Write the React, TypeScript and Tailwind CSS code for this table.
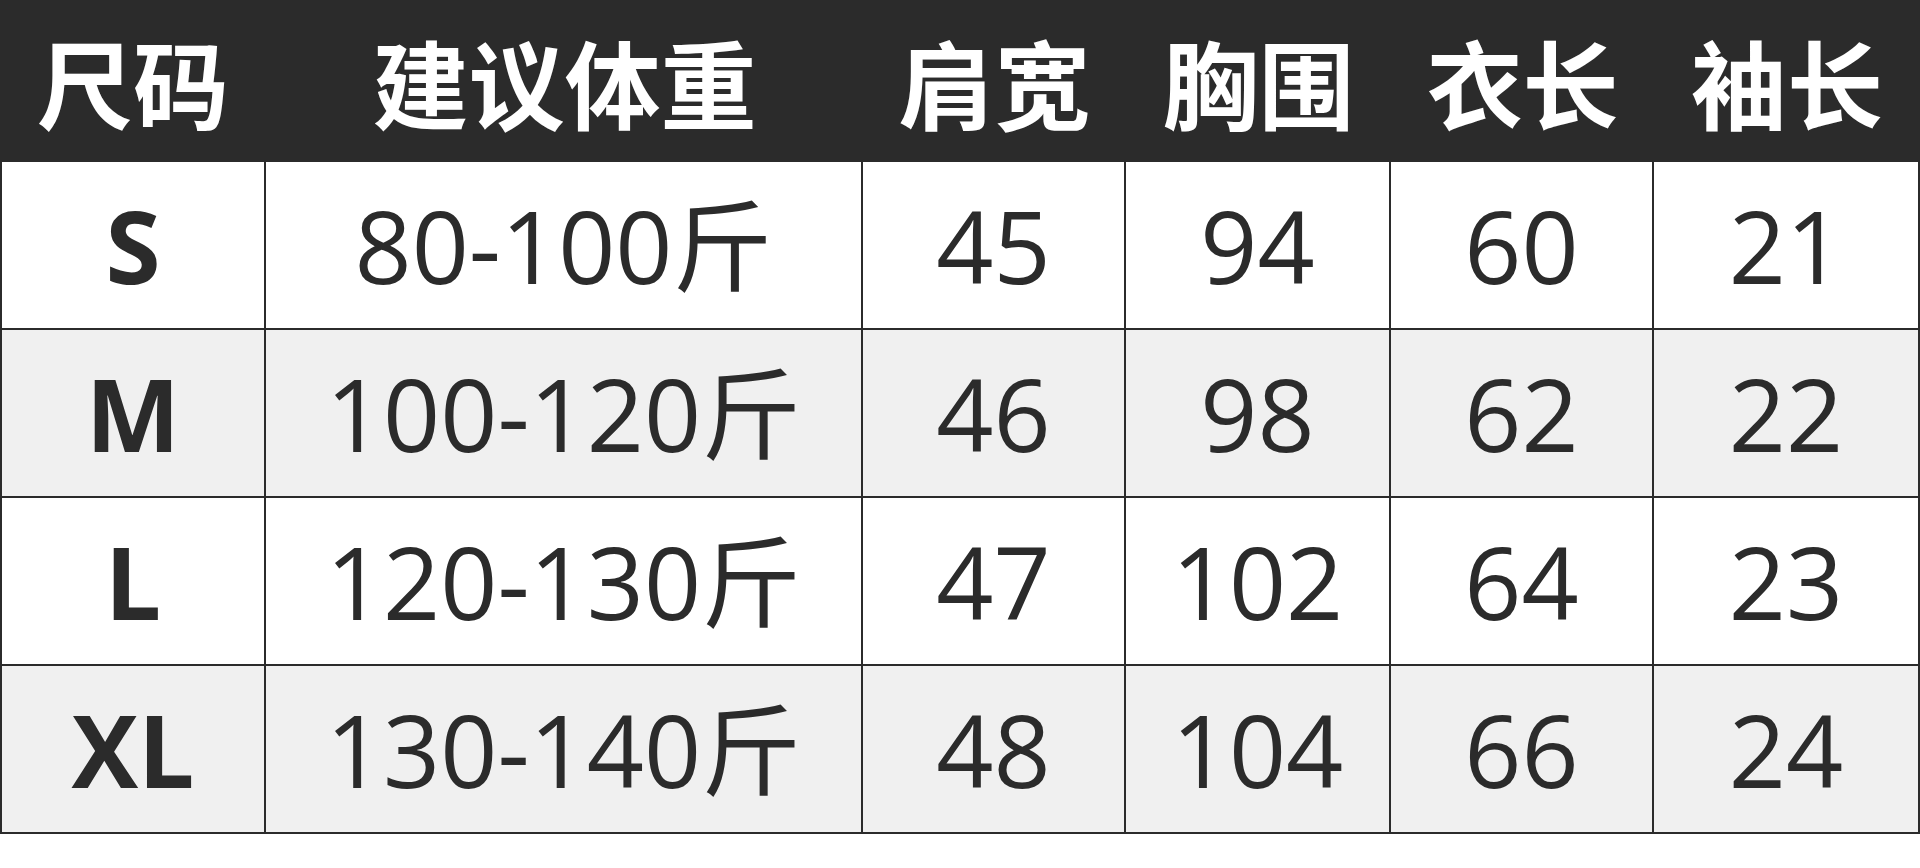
import React from "react";

const headers = ["尺码", "建议体重", "肩宽", "胸围", "衣长", "袖长"];

const rows = [
  ["S", "80-100", "45", "94", "60", "21"],
  ["M", "100-120", "46", "98", "62", "22"],
  ["L", "120-130", "47", "102", "64", "23"],
  ["XL", "130-140", "48", "104", "66", "24"],
];

const grid = "grid grid-cols-[266px_597px_263px_265px_263px_266px]";

export default function App() {
  return (
    <div className="w-[1920px] h-[868px] bg-white overflow-hidden">
      <div className={`${grid} h-[162px] bg-[#2b2b2b]`}>
        {headers.map((h) => (
          <div
            key={h}
            className="flex items-center justify-center text-white font-bold text-[96px] leading-none"
            style={{ fontFamily: '"Noto Sans CJK SC", sans-serif' }}
          >
            {h}
          </div>
        ))}
      </div>
      {rows.map((r, i) => (
        <div
          key={r[0]}
          className={`${grid} h-[168px] ${i % 2 === 1 ? "bg-[#f0f0f0]" : "bg-white"}`}
        >
          {r.map((c, j) => (
            <div
              key={j}
              className={`flex items-center justify-center border-b-2 border-r-2 border-[#2b2b2b] text-[#2b2b2b] text-[100px] leading-none ${
                j === 0 ? "border-l-2 font-bold" : "font-normal"
              }`}
              style={{ fontFamily: '"Open Sans", "Noto Sans CJK SC", sans-serif' }}
            >
              {c}
              {j === 1 ? "斤" : null}
            </div>
          ))}
        </div>
      ))}
    </div>
  );
}
